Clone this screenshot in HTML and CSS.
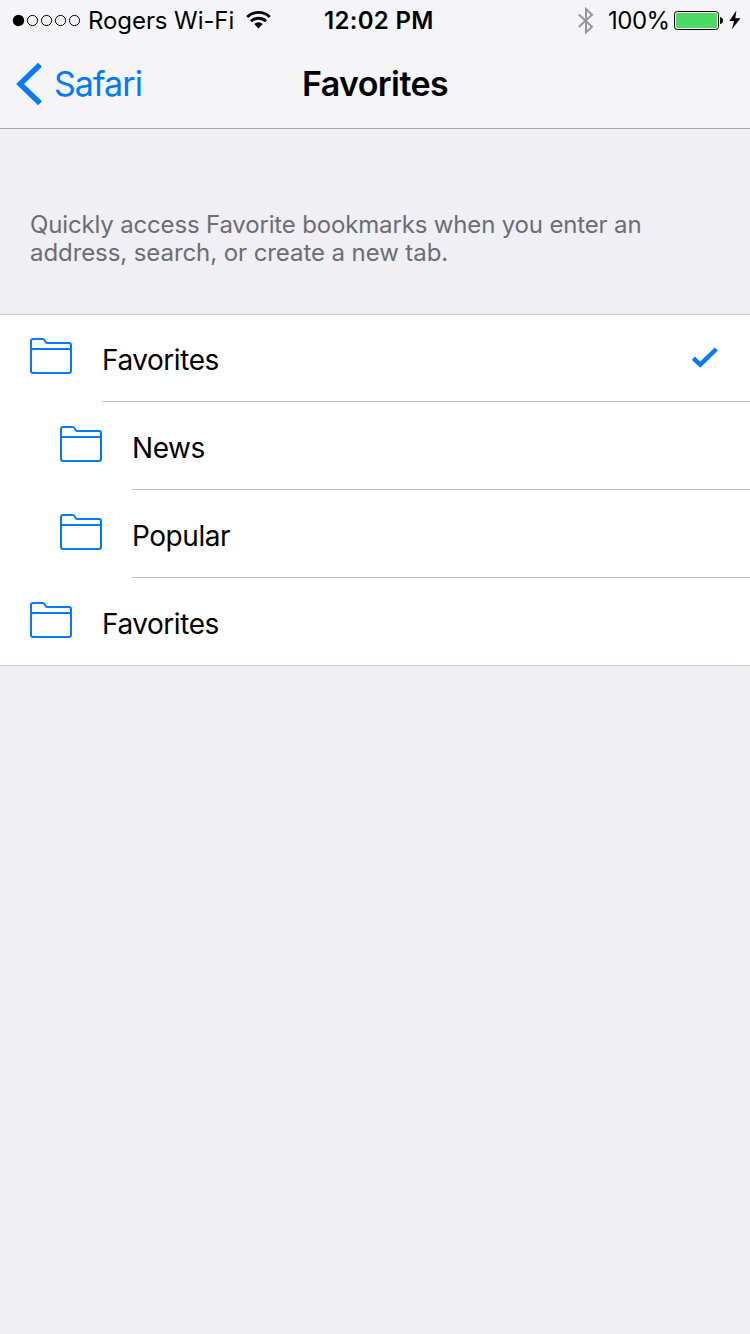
FILE: index.html
```html
<!DOCTYPE html>
<html lang="en">
<head>
<meta charset="utf-8">
<title>Favorites</title>
<link rel="stylesheet" href="styles.css">
</head>
<body>
<svg class="defs" width="0" height="0">
  <symbol id="folder" viewBox="0 0 42 36">
    <path d="M1 12V3.2Q1 1 3.2 1H12.6Q14 1 14.7 2.4L15.6 4.1Q16.2 5 17.4 5H38.8Q41 5 41 7.2V32.8Q41 35 38.8 35H3.2Q1 35 1 32.8V13Q1 11 3.2 11H38.8Q41 11 41 13" fill="none" stroke="#007aff" stroke-width="2"/>
  </symbol>
</svg>
<header class="header">
  <div class="status">
    <div class="status-left">
      <svg class="signal" width="68" height="15" viewBox="0 0 68 15">
        <circle cx="6.5" cy="7.5" r="5.7"/>
        <g fill="none" stroke="#000"><circle cx="20.5" cy="7.5" r="5.1"/><circle cx="34.5" cy="7.5" r="5.1"/><circle cx="48.5" cy="7.5" r="5.1"/><circle cx="62.5" cy="7.5" r="5.1"/></g>
      </svg>
      <span class="carrier">Rogers Wi-Fi</span>
      <svg class="wifi" width="26" height="18" viewBox="0 0 26 18">
        <g fill="none" stroke="#000" stroke-width="2.8"><path d="M1.2 5.9A16.5 16.5 0 0 1 23.8 5.9"/><path d="M5 10.2A11 11 0 0 1 20 10.2"/></g>
        <path d="M8.3 13A6.2 6.2 0 0 1 16.7 13L12.5 17.6Z"/>
      </svg>
    </div>
    <span class="time">12:02 PM</span>
    <div class="status-right">
      <svg class="bluetooth" width="16" height="28" viewBox="0 0 16 28">
        <path d="M.8 7.5L14 19.8L8 25.5V2L14 7.8L.8 20" fill="none" stroke="#979799" stroke-width="2"/>
      </svg>
      <span class="percent">100%</span>
      <svg class="battery" width="50" height="20" viewBox="0 0 50 20">
        <rect x=".5" y="1.5" width="44" height="18" rx="2.8" fill="#fff" stroke="#000"/>
        <rect x="2" y="3" width="41" height="15" rx="1.2" fill="#4cd964"/>
        <path d="M46 7Q49 7.5 49 10.5T46 14Z"/>
      </svg>
      <svg class="bolt" width="12" height="20" viewBox="0 0 12 20"><path d="M7.4 .5L.3 11H5L2.8 19.5L11.5 8.2H6.3Z"/></svg>
    </div>
  </div>
  <nav class="nav">
    <a class="back">
      <svg width="26" height="42" viewBox="0 0 26 42"><path d="M24 1.7L4 21L24 40.3" fill="none" stroke="#007aff" stroke-width="5.4"/></svg>
      <span class="back-label">Safari</span>
    </a>
    <h1 class="title">Favorites</h1>
  </nav>
</header>
<main>
  <p class="note"><span class="note-lead">Quickly access Favorite bookmarks when you enter an</span><br>address, search, or create a new tab.</p>
  <ul class="list">
    <li class="row"><svg class="folder"><use href="#folder"/></svg><div class="cell"><span>Favorites</span><svg class="check" width="26" height="22" viewBox="0 0 26 22"><path d="M1.4 11.2L8.2 17.6L24.3 2" fill="none" stroke="#007aff" stroke-width="4.4"/></svg></div></li>
    <li class="row nested"><svg class="folder"><use href="#folder"/></svg><div class="cell"><span>News</span></div></li>
    <li class="row nested"><svg class="folder"><use href="#folder"/></svg><div class="cell"><span>Popular</span></div></li>
    <li class="row"><svg class="folder"><use href="#folder"/></svg><div class="cell"><span>Favorites</span></div></li>
  </ul>
</main>
</body>
</html>
```
FILE: styles.css
```css
* { box-sizing: border-box; }
body {
  margin: 0;
  min-height: 1334px;
  background: #efeff4;
  color: #000;
  font-family: Inter, "Liberation Sans", sans-serif;
}
svg { display: block; flex: none; }
.defs { position: absolute; }
.header {
  height: 129px;
  background: #f5f5f7;
  border-bottom: 1px solid #a7a7ac;
}
.status {
  display: grid;
  grid-template-columns: 312px 1fr auto;
  height: 40px;
  padding: 0 9px 0 12px;
  font-size: 24px;
  line-height: 42px;
  white-space: nowrap;
}
.status-left, .status-right { display: flex; align-items: flex-start; }
.signal { margin-top: 13px; }
.carrier { margin-left: 8px; width: 146px; letter-spacing: -0.08px; }
.wifi { margin: 11px 0 0 12px; }
.time { font-weight: 600; letter-spacing: 0.3px; }
.bluetooth { margin: 7px 14px 0 0; }
.percent { width: 60px; letter-spacing: -0.5px; }
.battery { margin: 10px 5px 0 6px; }
.bolt { margin-top: 10px; }
.nav {
  display: grid;
  grid-template-columns: 1fr auto 1fr;
  align-items: center;
  height: 88px;
  padding: 0 16px;
}
.back { display: flex; align-items: center; gap: 12px; color: #007aff; font-size: 34px; }
.back-label { letter-spacing: -0.95px; }
.title { margin: 0; font-size: 34px; font-weight: 600; letter-spacing: -0.6px; }
.back-label, .title { line-height: 40px; padding-bottom: 1px; }
.note {
  margin: 0;
  padding: 82px 30px 47px;
  color: #6d6d72;
  font-size: 24px;
  line-height: 28px;
  letter-spacing: -0.08px;
  white-space: nowrap;
}
.note-lead { letter-spacing: -0.16px; }
.list {
  margin: 0;
  padding: 0;
  list-style: none;
  background: #fff;
  border-top: 1px solid #c8c7cc;
  border-bottom: 1px solid #c8c7cc;
}
.row { display: flex; height: 88px; padding-left: 30px; }
.row:first-child { height: 87px; }
.row:last-child { height: 87px; }
.nested { padding-left: 60px; }
.folder { width: 42px; height: 36px; margin: 24px 30px 0 0; }
.row:first-child .folder { margin-top: 23px; }
.cell {
  flex: 1;
  display: flex;
  justify-content: space-between;
  padding-right: 32px;
  border-bottom: 1px solid #c8c7cc;
  font-size: 28px;
  line-height: 92px;
  letter-spacing: -0.45px;
}
.row:first-child .cell { line-height: 90px; }
.row:last-child .cell { border-bottom: 0; }
.check { margin-top: 32px; }
```
